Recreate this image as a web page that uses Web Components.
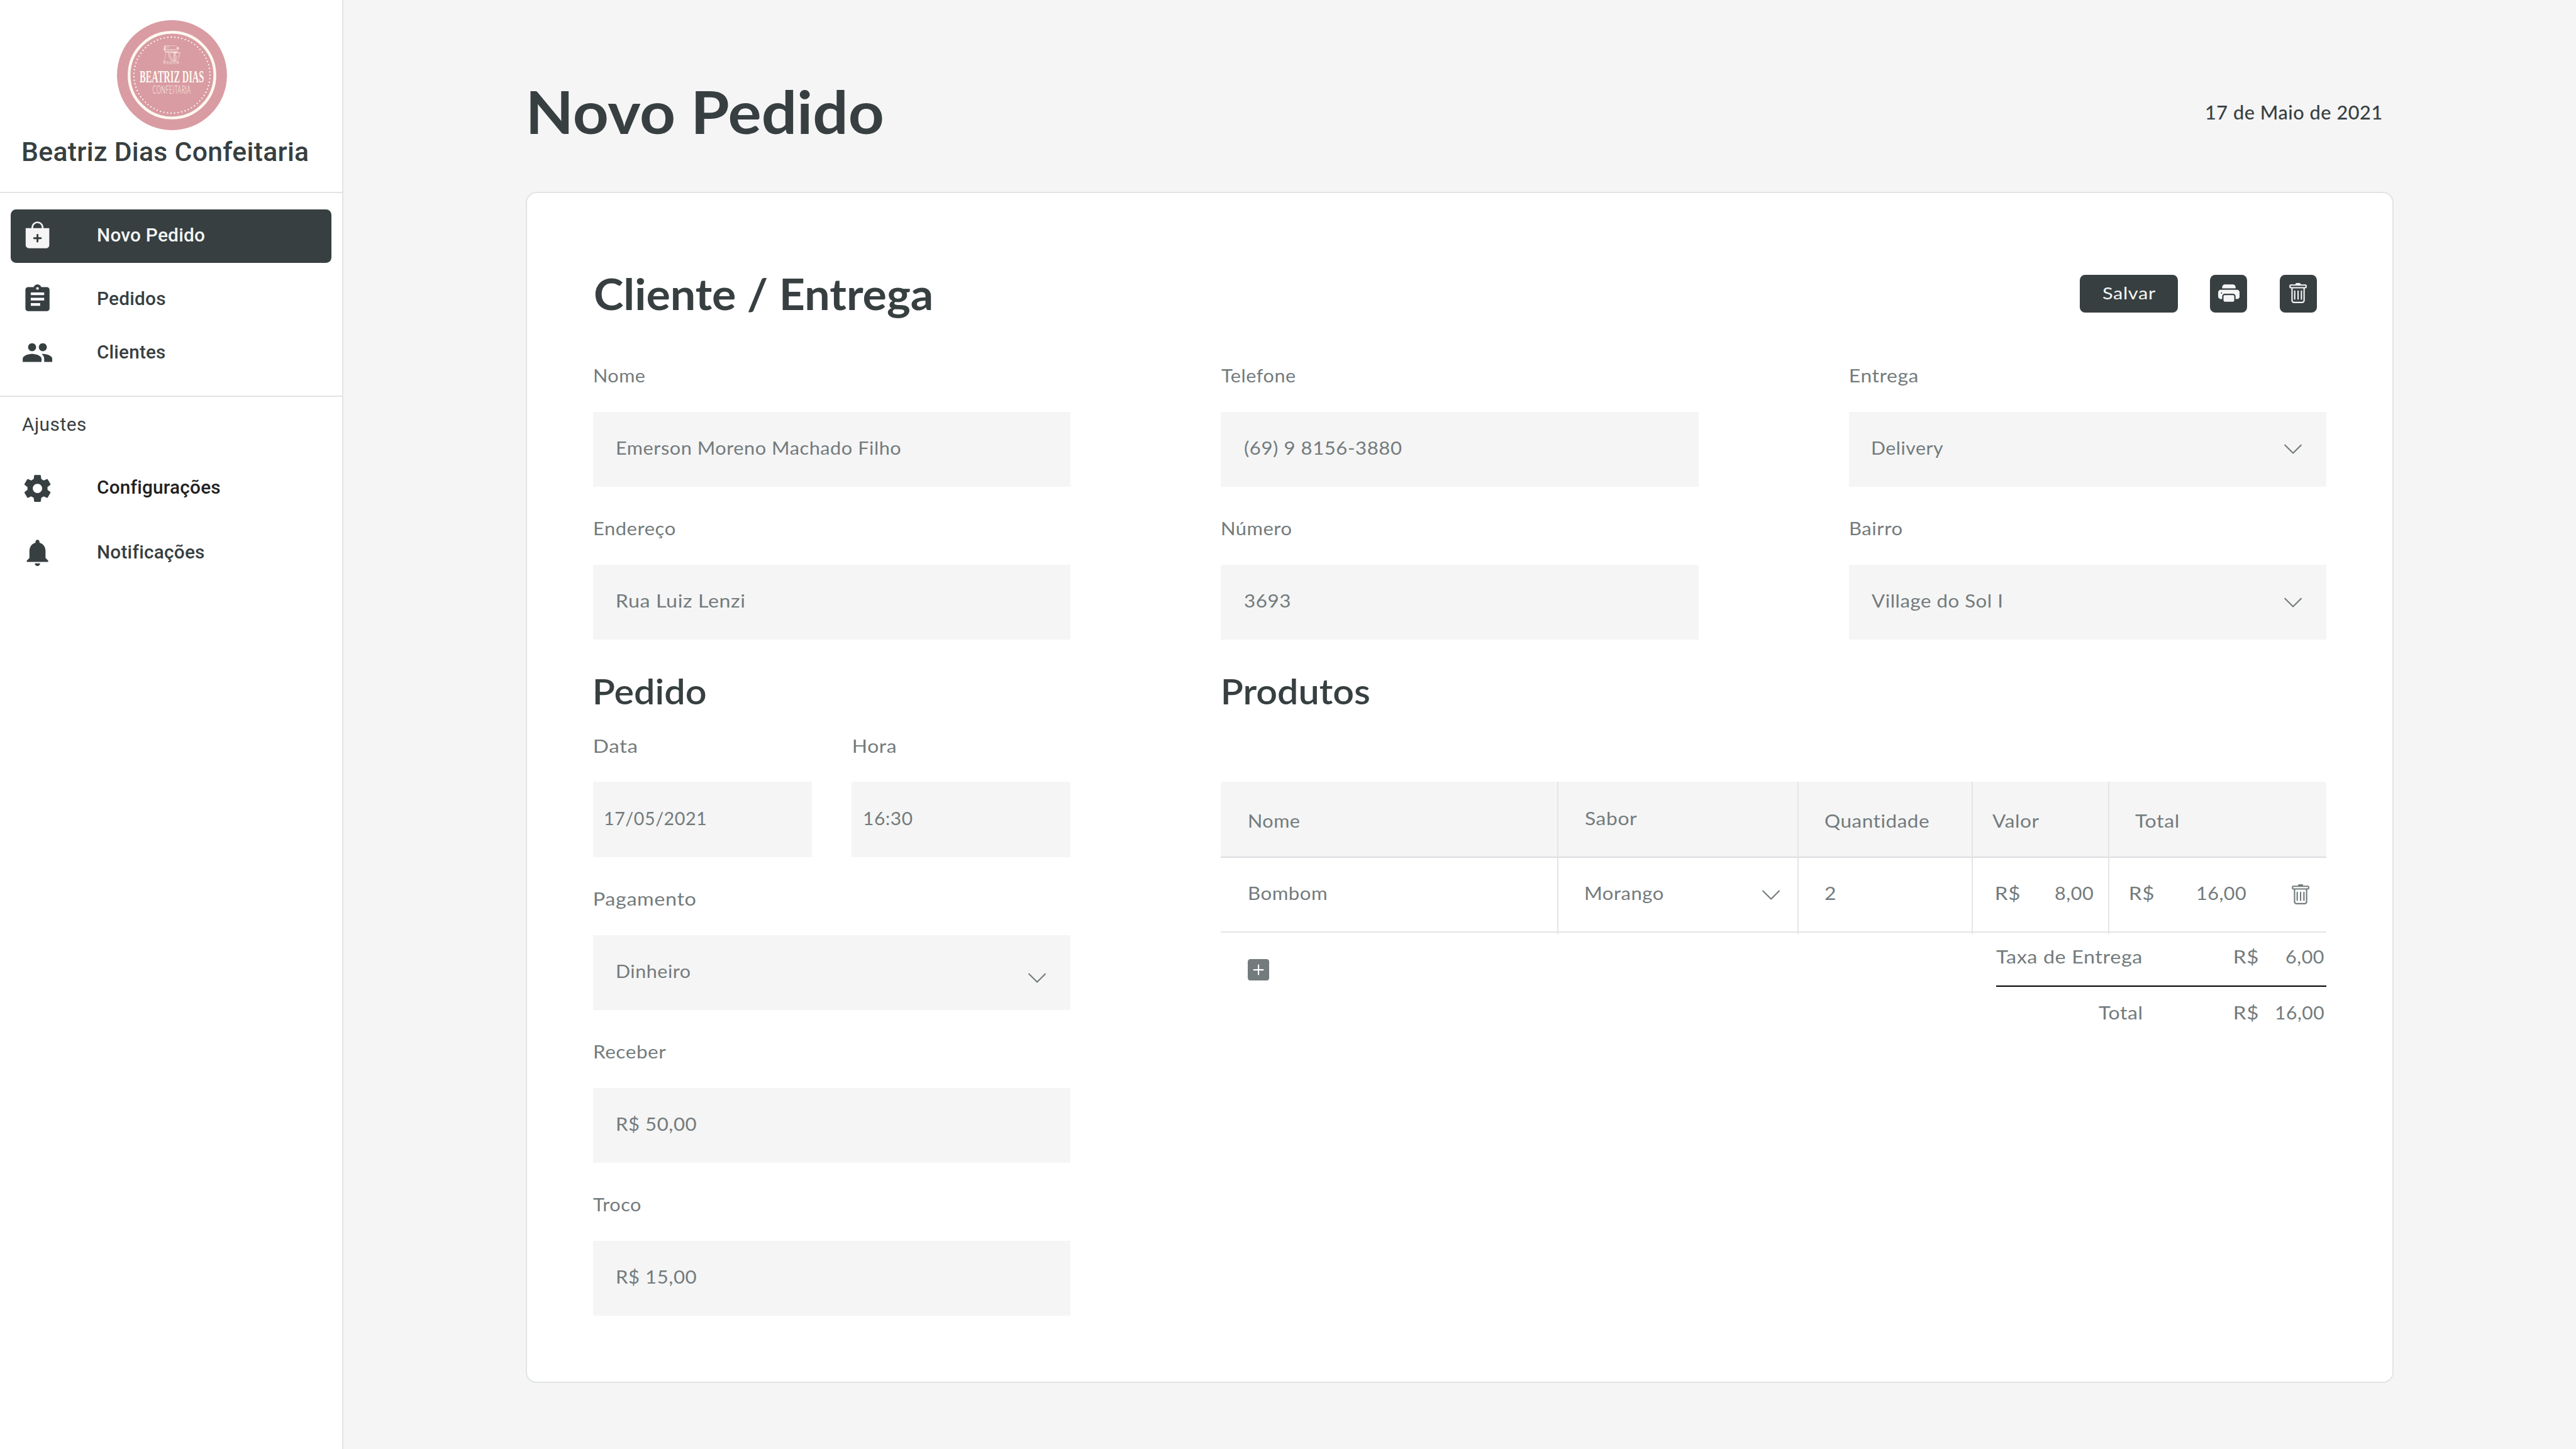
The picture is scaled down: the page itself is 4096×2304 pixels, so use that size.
<!DOCTYPE html>
<html lang="pt-BR">
<head>
<meta charset="utf-8">
<title>Novo Pedido</title>
<style>
  /* 1rem is one design unit of a 1920 × 1080 canvas */
  html { font-size: 2.1333333px; }
  body {
    margin: 0; width: 1920rem; height: 1080rem; overflow: hidden; background: #f5f5f5;
    --dark: #373f41; --gray: #737b7d; --light: #f5f5f5; --line: #e5e5e5;
    --main: Lato, "Open Sans", sans-serif;
    --side: Roboto, sans-serif;
  }
</style>
</head>
<body>
<order-app></order-app>

<script>
const ICONS = {
  bag: ['0 0 24 24', '<path fill-rule="evenodd" d="M3.2 6H7.5V5.5a4.5 4.5 0 0 1 9 0V6h4.3v12.6a2.4 2.4 0 0 1-2.4 2.4H5.6a2.4 2.4 0 0 1-2.4-2.4zM8.8 6h6.4v-.6a3.2 3.2 0 0 0-6.4 0zM11.3 11v1.8H9.5a.7.7 0 0 0 0 1.4h1.8V16a.7.7 0 0 0 1.4 0v-1.8h1.8a.7.7 0 0 0 0-1.4h-1.8V11a.7.7 0 0 0-1.4 0z"/>'],
  list: ['0 0 24 24', '<path d="M19 3h-4.18C14.4 1.84 13.3 1 12 1c-1.3 0-2.4.84-2.82 2H5c-1.1 0-2 .9-2 2v14c0 1.1.9 2 2 2h14c1.1 0 2-.9 2-2V5c0-1.1-.9-2-2-2zm-7 0c.55 0 1 .45 1 1s-.45 1-1 1-1-.45-1-1 .45-1 1-1zm2 14H7v-2h7v2zm3-4H7v-2h10v2zm0-4H7V7h10v2z"/>'],
  people: ['0 0 24 24', '<path d="M16 11c1.66 0 2.99-1.34 2.99-3S17.66 5 16 5s-3 1.34-3 3 1.34 3 3 3zm-8 0c1.66 0 2.99-1.34 2.99-3S9.66 5 8 5 5 6.34 5 8s1.34 3 3 3zm0 2c-2.33 0-7 1.17-7 3.5V19h14v-2.5c0-2.33-4.67-3.5-7-3.5zm8 0c-.29 0-.62.02-.97.05 1.16.84 1.97 1.97 1.97 3.45V19h6v-2.5c0-2.33-4.67-3.5-7-3.5z"/>'],
  gear: ['0 0 24 24', '<path d="M19.43 12.98c.04-.32.07-.64.07-.98s-.03-.66-.07-.98l2.11-1.65c.19-.15.24-.42.12-.64l-2-3.46c-.12-.22-.39-.3-.61-.22l-2.49 1c-.52-.4-1.08-.73-1.69-.98l-.38-2.65A.49.49 0 0 0 14 2h-4c-.25 0-.46.18-.49.42l-.38 2.65c-.61.25-1.17.59-1.69.98l-2.49-1c-.23-.09-.49 0-.61.22l-2 3.46c-.13.22-.07.49.12.64l2.11 1.65c-.04.32-.07.65-.07.98s.03.66.07.98l-2.11 1.65c-.19.15-.24.42-.12.64l2 3.46c.12.22.39.3.61.22l2.49-1c.52.4 1.08.73 1.69.98l.38 2.65c.03.24.24.42.49.42h4c.25 0 .46-.18.49-.42l.38-2.65c.61-.25 1.17-.59 1.69-.98l2.49 1c.23.09.49 0 .61-.22l2-3.46c.12-.22.07-.49-.12-.64l-2.11-1.65zM12 15.5c-1.93 0-3.5-1.57-3.5-3.5s1.57-3.5 3.5-3.5 3.5 1.57 3.5 3.5-1.57 3.5-3.5 3.5z"/>'],
  bell: ['0 0 24 24', '<path d="M12 22c1.1 0 2-.9 2-2h-4c0 1.1.89 2 2 2zm6-6v-5c0-3.07-1.64-5.64-4.5-6.32V4c0-.83-.67-1.5-1.5-1.5s-1.5.67-1.5 1.5v.68C7.63 5.36 6 7.92 6 11v5l-2 2v1h16v-1l-2-2z"/>'],
  printer: ['0 0 16 16', '<path d="M5 1a2 2 0 0 0-2 2v1h10V3a2 2 0 0 0-2-2H5zm6 8H5a1 1 0 0 0-1 1v3a1 1 0 0 0 1 1h6a1 1 0 0 0 1-1v-3a1 1 0 0 0-1-1z"/><path d="M0 7a2 2 0 0 1 2-2h12a2 2 0 0 1 2 2v3a2 2 0 0 1-2 2h-1v-2a2 2 0 0 0-2-2H5a2 2 0 0 0-2 2v2H2a2 2 0 0 1-2-2V7zm2.5 1a.5.5 0 1 0 0-1 .5.5 0 0 0 0 1z"/>'],
  trash: ['0 0 16 16', '<path d="M5.5 5.5A.5.5 0 0 1 6 6v6a.5.5 0 0 1-1 0V6a.5.5 0 0 1 .5-.5zm2.5 0a.5.5 0 0 1 .5.5v6a.5.5 0 0 1-1 0V6a.5.5 0 0 1 .5-.5zm3 .5a.5.5 0 0 0-1 0v6a.5.5 0 0 0 1 0V6z"/><path fill-rule="evenodd" d="M14.5 3a1 1 0 0 1-1 1H13v9a2 2 0 0 1-2 2H5a2 2 0 0 1-2-2V4h-.5a1 1 0 0 1-1-1V2a1 1 0 0 1 1-1H6a1 1 0 0 1 1-1h2a1 1 0 0 1 1 1h3.5a1 1 0 0 1 1 1v1zM4.118 4 4 4.059V13a1 1 0 0 0 1 1h6a1 1 0 0 0 1-1V4.059L11.882 4H4.118zM2.5 3V2h11v1h-11z"/>'],
  chevron: ['0 0 16 16', '<path fill-rule="evenodd" d="M1.646 4.646a.5.5 0 0 1 .708 0L8 10.293l5.646-5.647a.5.5 0 0 1 .708.708l-6 6a.5.5 0 0 1-.708 0l-6-6a.5.5 0 0 1 0-.708z"/>'],
  plus: ['0 0 16 16', '<path d="M2 0a2 2 0 0 0-2 2v12a2 2 0 0 0 2 2h12a2 2 0 0 0 2-2V2a2 2 0 0 0-2-2H2zm6.5 4.5v3h3a.5.5 0 0 1 0 1h-3v3a.5.5 0 0 1-1 0v-3h-3a.5.5 0 0 1 0-1h3v-3a.5.5 0 0 1 1 0z"/>'],
};

class Base extends HTMLElement {
  connectedCallback() {
    if (this.shadowRoot) return;
    this.attachShadow({ mode: 'open' }).innerHTML = this.render();
    this.ready && this.ready();
  }
  a(name, fallback = '') { return this.getAttribute(name) ?? fallback; }
}

/* Icon: name, size */
customElements.define('ui-icon', class extends Base {
  render() {
    const [box, body] = ICONS[this.a('name')];
    const s = this.a('size', '16');
    return `<style>:host{display:block;flex:none;width:${s}rem;height:${s}rem}
      svg{display:block;width:100%;height:100%;fill:currentColor}</style>
      <svg viewBox="${box}">${body}</svg>`;
  }
});

/* One line of text, 20 units high, whose ink is exactly w units wide from the box's left edge.
   The baseline lies b em below the middle of the box. */
const pen = document.createElement('canvas').getContext('2d');
customElements.define('fit-text', class extends Base {
  render() {
    return `<style>:host{display:block;flex:none;width:${this.a('w')}rem;height:20rem;white-space:nowrap}
      span{display:block;width:max-content;height:20rem;line-height:20rem;transform-origin:0 50%}
      i{display:inline-block;width:0;height:0}</style><span></span>`;
  }
  ready() {
    const span = this.shadowRoot.querySelector('span');
    const text = this.a('text');
    span.textContent = text;
    const cs = getComputedStyle(this);
    const unit = 2.1333333, spacing = parseFloat(this.a('s', '0.25')) * unit;
    const probe = document.createElement('i');
    span.append(probe);
    const base = probe.getBoundingClientRect().bottom - span.getBoundingClientRect().top;
    probe.remove();
    const dy = 10 * unit + parseFloat(this.a('b', '0.387')) * parseFloat(cs.fontSize) - base;
    pen.font = `${cs.fontWeight} ${cs.fontSize} ${cs.fontFamily}`;
    const m = pen.measureText(text);
    const ink = m.actualBoundingBoxLeft + m.actualBoundingBoxRight + spacing * (text.length - 1);
    const k = parseFloat(this.a('w')) * unit / ink;
    span.style.letterSpacing = spacing + 'px';
    span.style.transform = `translateY(${dy}px) scaleX(${k}) translateX(${m.actualBoundingBoxLeft}px)`;
  }
});

customElements.define('brand-logo', class extends Base {
  render() {
    return `<style>:host{display:block;position:relative;width:82rem;height:82rem}svg{display:block;width:100%;height:100%}
      fit-text{position:absolute;color:#fef9f1}
      .n{left:17rem;top:31.2rem;font:700 12.83rem "Liberation Serif",serif}
      .c{left:26.9rem;top:41.55rem;font:300 8.4rem var(--main)}
    </style>
    <svg viewBox="54 60 984 984">
      <circle cx="546" cy="552" r="492" fill="#d99ca3"/>
      <circle cx="546" cy="552" r="383.5" fill="none" stroke="#fef9f1" stroke-width="25"/>
      <circle cx="546" cy="552" r="340" fill="none" stroke="#fef9f1" stroke-width="13" stroke-linecap="round" pathLength="67" stroke-dasharray="0 1"/>
      <g fill="none" stroke="#fbeee6" stroke-width="3" stroke-linejoin="round" stroke-linecap="round">
        <path d="M486 289h88c12 2 20 12 21 24v20c-2 8-8 12-16 13l-90-8c-10-3-15-8-15-16 0-14 2-26 12-33z"/>
        <path d="M486 289c-8 12-8 34-4 46M478 296v34M482 292v40M490 291v46M474 310h12M474 320h12M500 292l4 18M517 291v16"/>
        <path d="M496 321h92M500 328h84"/>
        <path d="M593 303h9l4 6v10h-12z" fill="#fbeee6"/>
        <path d="M552 344c4 4 8 6 14 7v6h10v-6c8 0 14-3 20-7z" fill="#fbeee6"/>
        <path d="M489 338v26c0 24-6 46-16 64M487 350c10-4 20-2 28-4 8-10 24-12 34-5M493 344l20 3M512 347c0 30 6 60 34 80"/>
        <path d="M520 350h102c-4 2-7 5-7 10-2 34-14 58-34 68h-24c-22-14-34-42-37-78z"/>
        <path d="M526 354h40M580 354h34M530 366c4 26 12 44 26 56M608 372l-3 14"/>
        <path d="M571 358c-22 22-22 50 0 70 22-20 22-48 0-70zM571 358c-10 22-10 50 0 70 10-20 10-48 0-70zM571 358v68"/>
        <path d="M473 428c-4 6-6 12-5 18 12 3 22 3 36 3h74c10 0 18 0 27-4v-14c-4-2-8-2-12 0l-50 1c-28 2-46 0-70-4z"/>
        <path d="M474 436l10-6M476 442l12-8M500 440h12M530 441h14M560 440h8M590 438l14-4M592 444l12-6"/>
      </g>
    </svg>
    <fit-text class="n" s="0" w="47.9" text="BEATRIZ DIAS"></fit-text>
    <fit-text class="c" s="0.4" w="28.25" text="CONFEITARIA"></fit-text>`;
  }
});

customElements.define('nav-item', class extends Base {
  render() {
    return `<style>
      :host{display:flex;align-items:center;height:40rem;margin:0 8rem;padding-left:8rem;border-radius:4rem;box-sizing:border-box;
        color:var(--dark);font:500 14rem var(--side)}
      :host([active]){background:var(--dark);color:var(--light)}
      fit-text{margin:-1.6rem 0 0 ${this.a('gap', '33')}rem;color:${this.a('color', 'inherit')}}
    </style>
    <ui-icon name="${this.a('icon')}" size="24"></ui-icon><fit-text b="0.342" s="0.1" w="${this.a('w')}" text="${this.a('label')}"></fit-text>`;
  }
});

customElements.define('side-bar', class extends Base {
  render() {
    return `<style>
      :host{display:flex;flex-direction:column;width:256rem;height:1080rem;box-sizing:border-box;background:#fff;border-right:1rem solid #e3e3e3}
      brand-logo{margin:15rem 0 0 87rem}
      .name{margin:6.1rem 0 19.9rem 17.4rem;font:500 20rem var(--side);color:var(--dark)}
      hr{border:0;margin:0;height:1rem;background:#e3e3e3;flex:none}
      .cap{margin:10.2rem 0 17.8rem 16.4rem;font:400 14rem var(--side);color:var(--dark)}
      .a{margin-top:12rem}.b{margin-top:7rem}.c{margin-bottom:12rem}.d{margin-bottom:8rem}
    </style>
    <brand-logo></brand-logo>
    <fit-text class="name" b="0.342" s="0.15" w="212.4" text="Beatriz Dias Confeitaria"></fit-text>
    <hr>
    <nav-item class="a" active icon="bag" label="Novo Pedido" w="79.2"></nav-item>
    <nav-item class="b" icon="list" label="Pedidos" w="50.2"></nav-item>
    <nav-item class="c" icon="people" label="Clientes" gap="32.6" w="50.6"></nav-item>
    <hr>
    <fit-text class="cap" b="0.342" s="0.25" w="47.3" text="Ajustes"></fit-text>
    <nav-item class="d" icon="gear" label="Configurações" gap="32.6" w="91.2" color="#212121"></nav-item>
    <nav-item icon="bell" label="Notificações" w="78.9"></nav-item>`;
  }
});

customElements.define('form-field', class extends Base {
  render() {
    const chev = this.hasAttribute('select') ? `<ui-icon name="chevron"></ui-icon>` : '';
    return `<style>
      :host{display:block;color:var(--gray);font:400 14rem var(--main)}
      .label{margin:0 0 17.4rem ${this.a('lx', '1')}rem}
      .box{display:flex;align-items:flex-start;justify-content:space-between;height:56rem;box-sizing:border-box;background:var(--light);
        padding:16.58rem 17rem 0 ${this.a('vx', '17.7')}rem}
      ui-icon{margin-top:${this.a('drop', '3.42')}rem}
    </style>
    <fit-text class="label" w="${this.a('lw')}" text="${this.a('label')}"></fit-text>
    <div class="box"><fit-text w="${this.a('vw')}" text="${this.a('value')}"></fit-text>${chev}</div>`;
  }
});

customElements.define('ui-button', class extends Base {
  render() {
    return `<style>:host{display:flex;align-items:center;justify-content:center;height:28rem;width:28rem;border-radius:4rem;
      background:var(--dark);color:var(--light);font:400 13rem var(--main)}</style><slot></slot>`;
  }
});

customElements.define('product-table', class extends Base {
  render() {
    return `<style>
      :host{display:block;color:var(--gray);font:400 14rem var(--main)}
      .row{display:grid;grid-template-columns:251.5rem 179rem 130rem 102rem 161.5rem;box-sizing:border-box;border-bottom:1rem solid var(--line);height:56rem}
      .head{height:56.5rem;background:var(--light);border-color:#dcdce0}
      .row>div{display:flex;align-items:flex-start;box-sizing:border-box;height:calc(100% + 1rem);border-right:1rem solid var(--line);padding-top:16.08rem;padding-left:20rem}
      .body>div{height:calc(100% + 1.5rem)}
      .row>div:last-child{border-right:0}
      .row>div:first-child{padding-left:21rem}
      .head>div{padding-top:18.58rem}
      .head>div:nth-child(2){padding-top:16.58rem}
      ui-icon{margin-top:3.42rem}
      .foot{display:flex;justify-content:space-between;align-items:flex-start}
      .foot>ui-icon{margin:19.5rem 0 0 20rem}
      .sum{width:246rem;padding-top:7.08rem}
      .line{display:flex}
      .rule{height:1rem;background:#000;margin:11.92rem 0 9.08rem}
    </style>
    <div class="row head">
      <div><fit-text w="37.6" text="Nome"></fit-text></div>
      <div><fit-text w="38.8" text="Sabor"></fit-text></div>
      <div><fit-text w="77.5" text="Quantidade"></fit-text></div>
      <div style="padding-left:14.4rem"><fit-text w="34.7" text="Valor"></fit-text></div>
      <div style="padding-left:18.8rem"><fit-text w="31.9" text="Total"></fit-text></div>
    </div>
    <div class="row body">
      <div><fit-text w="57.7" text="Bombom"></fit-text></div>
      <div><fit-text style="margin-left:.5rem" w="57.8" text="Morango"></fit-text><ui-icon style="margin-left:72.2rem" name="chevron"></ui-icon></div>
      <div><fit-text w="7.5" text="2"></fit-text></div>
      <div style="padding-left:17.2rem"><fit-text w="17.3" text="R$"></fit-text><fit-text style="margin-left:27rem" w="28.3" text="8,00"></fit-text></div>
      <div style="padding-left:15.1rem"><fit-text w="17.4" text="R$"></fit-text><fit-text style="margin-left:33rem" w="36.3" text="16,00"></fit-text><ui-icon style="margin-left:32.7rem" name="trash"></ui-icon></div>
    </div>
    <div class="foot">
      <ui-icon name="plus"></ui-icon>
      <div class="sum">
        <div class="line"><fit-text w="108" text="Taxa de Entrega"></fit-text><fit-text style="margin-left:69.7rem" w="17.3" text="R$"></fit-text><fit-text style="margin-left:21rem" w="28.2" text="6,00"></fit-text></div>
        <div class="rule"></div>
        <div class="line"><fit-text style="margin-left:76.4rem" w="31.8" text="Total"></fit-text><fit-text style="margin-left:69.5rem" w="17.3" text="R$"></fit-text><fit-text style="margin-left:13.4rem" w="35.8" text="16,00"></fit-text></div>
      </div>
    </div>`;
  }
});

customElements.define('order-card', class extends Base {
  render() {
    return `<style>
      :host{display:block;box-sizing:border-box;width:1392rem;height:888rem;background:#fff;border:1rem solid #e0e5e4;border-radius:8rem;padding:61rem 49rem 0;color:var(--dark)}
      header{display:flex;align-items:center;height:28rem;gap:24rem;padding-right:7rem}
      header fit-text.t{margin:-1rem auto 0 1.5rem;font:700 32rem var(--main)}
      .save{width:73rem}.save fit-text{margin-top:-1.86rem}
      .grid{display:grid;grid-template-columns:repeat(3,356rem);column-gap:112rem;row-gap:20.6rem;margin-top:36.6rem}
      .two{display:grid;grid-template-columns:356rem 824rem;column-gap:112rem;margin-top:21.9rem}
      .h{font:600 26rem var(--main);padding:6rem 0;margin-left:1.7rem}
      .left{display:flex;flex-direction:column;gap:20.6rem;margin-top:14.7rem}
      .pair{display:grid;grid-template-columns:163rem 163rem;gap:30rem}
      product-table{margin-top:52.1rem}
    </style>
    <header>
      <fit-text class="t" s="0" w="250.5" text="Cliente / Entrega"></fit-text>
      <ui-button class="save"><fit-text w="39.4" text="Salvar"></fit-text></ui-button>
      <ui-button><ui-icon name="printer"></ui-icon></ui-button>
      <ui-button><ui-icon name="trash"></ui-icon></ui-button>
    </header>
    <div class="grid">
      <form-field label="Nome" lw="37.6" value="Emerson Moreno Machado Filho" vw="211.3"></form-field>
      <form-field label="Telefone" lx="0.5" lw="55" value="(69) 9 8156-3880" vw="117"></form-field>
      <form-field label="Entrega" lx="1.2" lw="49.9" value="Delivery" vw="53.1" select></form-field>
      <form-field label="Endereço" lw="60.1" value="Rua Luiz Lenzi" vw="95"></form-field>
      <form-field label="Número" lw="51.6" value="3693" vw="33.8"></form-field>
      <form-field label="Bairro" lx="1.2" lw="38.5" value="Village do Sol I" vx="17.2" vw="96.8" select></form-field>
    </div>
    <div class="two">
      <div>
        <fit-text class="h" s="0" w="82.4" text="Pedido"></fit-text>
        <div class="left">
          <div class="pair">
            <form-field label="Data" lw="31.4" value="17/05/2021" vx="8.8" vw="75.2"></form-field>
            <form-field label="Hora" lw="31.2" value="16:30" vx="9" vw="36"></form-field>
          </div>
          <form-field label="Pagamento" lw="75.4" value="Dinheiro" vw="54.4" drop="7.42" select></form-field>
          <form-field label="Receber" lw="53.4" value="R$ 50,00" vw="59.2"></form-field>
          <form-field label="Troco" lx="0.3" lw="35.4" value="R$ 15,00" vw="59.2"></form-field>
        </div>
      </div>
      <div>
        <fit-text class="h" s="0" w="109" text="Produtos"></fit-text>
        <product-table></product-table>
      </div>
    </div>`;
  }
});

customElements.define('order-app', class extends Base {
  render() {
    return `<style>
      :host{display:flex;width:1920rem;height:1080rem}
      main{padding:52.87rem 136rem 0;width:1392rem}
      .top{display:flex;align-items:center;justify-content:space-between;height:60rem;margin-bottom:30.13rem;color:var(--dark)}
      .title{font:700 44rem var(--main);margin-left:3.3rem}
      .date{font:500 14rem var(--main);margin:1.4rem 8.8rem 0 0}
    </style>
    <side-bar></side-bar>
    <main>
      <div class="top"><fit-text class="title" s="0" w="262.4" text="Novo Pedido"></fit-text><fit-text class="date" w="130.7" text="17 de Maio de 2021"></fit-text></div>
      <order-card></order-card>
    </main>`;
  }
});
</script>
</body>
</html>
